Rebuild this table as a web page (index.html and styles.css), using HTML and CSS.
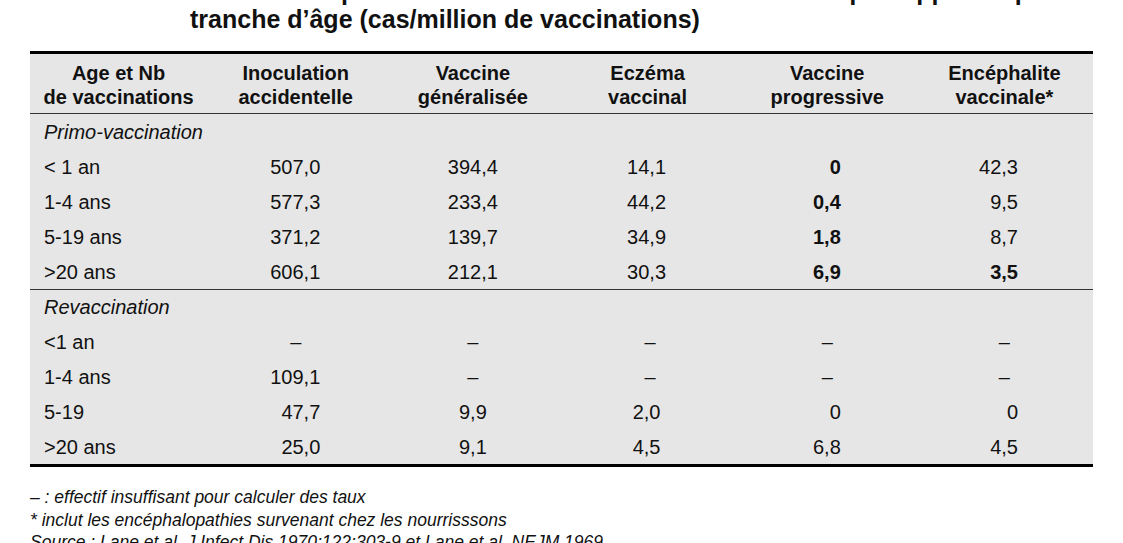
FILE: index.html
```html
<!DOCTYPE html>
<html lang="fr">
<head>
<meta charset="utf-8">
<title>Complications de la vaccination antivariolique</title>
<link rel="stylesheet" href="styles.css">
</head>
<body>
<h1 class="title">Taux de complications dues à la vaccination antivariolique rapportée par<br>tranche d’âge (cas/million de vaccinations)</h1>
<table class="data">
  <colgroup>
    <col class="c"><col class="c"><col class="c"><col class="c"><col class="c"><col class="c">
  </colgroup>
  <thead>
    <tr>
      <th>Age et Nb<br>de vaccinations</th>
      <th>Inoculation<br>accidentelle</th>
      <th>Vaccine<br>généralisée</th>
      <th class="h4">Eczéma<br>vaccinal</th>
      <th>Vaccine<br>progressive</th>
      <th>Encéphalite<br>vaccinale*</th>
    </tr>
  </thead>
  <tbody>
    <tr><td class="section" colspan="6">Primo-vaccination</td></tr>
    <tr><td class="age">&lt; 1 an</td><td class="n2">507,0</td><td class="n3">394,4</td><td class="n4">14,1</td><td class="n5 b">0</td><td class="n6">42,3</td></tr>
    <tr><td class="age">1-4 ans</td><td class="n2">577,3</td><td class="n3">233,4</td><td class="n4">44,2</td><td class="n5 b">0,4</td><td class="n6">9,5</td></tr>
    <tr><td class="age">5-19 ans</td><td class="n2">371,2</td><td class="n3">139,7</td><td class="n4">34,9</td><td class="n5 b">1,8</td><td class="n6">8,7</td></tr>
    <tr><td class="age">&gt;20 ans</td><td class="n2">606,1</td><td class="n3">212,1</td><td class="n4">30,3</td><td class="n5 b">6,9</td><td class="n6 b">3,5</td></tr>
  </tbody>
  <tbody>
    <tr><td class="section sep" colspan="6">Revaccination</td></tr>
    <tr><td class="age">&lt;1 an</td><td class="dash">–</td><td class="dash">–</td><td class="dash">–</td><td class="dash">–</td><td class="dash">–</td></tr>
    <tr><td class="age">1-4 ans</td><td class="n2">109,1</td><td class="dash">–</td><td class="dash">–</td><td class="dash">–</td><td class="dash">–</td></tr>
    <tr><td class="age">5-19</td><td class="n2">47,7</td><td class="n3">9,9</td><td class="n4">2,0</td><td class="n5">0</td><td class="n6">0</td></tr>
    <tr><td class="age">&gt;20 ans</td><td class="n2">25,0</td><td class="n3">9,1</td><td class="n4">4,5</td><td class="n5">6,8</td><td class="n6">4,5</td></tr>
  </tbody>
</table>
<div class="notes">
  <p>– : effectif insuffisant pour calculer des taux</p>
  <p>* inclut les encéphalopathies survenant chez les nourrisssons</p>
  <p>Source : Lane et al. J Infect Dis 1970;122:303-9 et Lane et al. NEJM 1969</p>
</div>
</body>
</html>
```
FILE: styles.css
```css
html, body {
  margin: 0;
  padding: 0;
  background: #fff;
  overflow: hidden;
}
body {
  font-family: "Liberation Sans", Arial, sans-serif;
  color: #111;
  width: 1123px;
  height: 543px;
}
.title {
  margin: -23px 0 0 190px;
  font-size: 25px;
  line-height: 28px;
  font-weight: bold;
  white-space: nowrap;
}
.data {
  margin: 18px 0 0 30px;
  width: 1063px;
  table-layout: fixed;
  border-collapse: separate;
  border-spacing: 0;
  background: #e6e6e6;
  border-top: 3px solid #000;
  border-bottom: 3px solid #000;
  font-size: 20px;
  line-height: 24px;
}
.data th {
  font-weight: bold;
  text-align: center;
  padding: 7px 0 4px;
  border-bottom: 1px solid #333;
}
.data th.h4 {
  padding-right: 5px;
}
.data td {
  height: 35px;
  padding: 0;
  vertical-align: middle;
  white-space: nowrap;
}
.data td.section {
  font-style: italic;
  padding-left: 14px;
  text-align: left;
}
.data td.sep {
  height: 34px;
  border-top: 1px solid #333;
}
.data td.age {
  padding-left: 14px;
  text-align: left;
}
.data td.n2 {
  text-align: right;
  padding-right: 64px;
}
.data td.n3 {
  text-align: center;
}
.data td.n4 {
  text-align: center;
  padding-right: 7px;
}
.data td.n5,
.data td.n6 {
  text-align: right;
  padding-right: 75px;
}
.data td.dash {
  text-align: center;
}
.data td.b {
  font-weight: bold;
}
.notes {
  margin: 19px 0 0 30px;
  font-size: 17.5px;
  line-height: 22.5px;
  font-style: italic;
}
.notes p {
  margin: 0;
  white-space: nowrap;
}
```
